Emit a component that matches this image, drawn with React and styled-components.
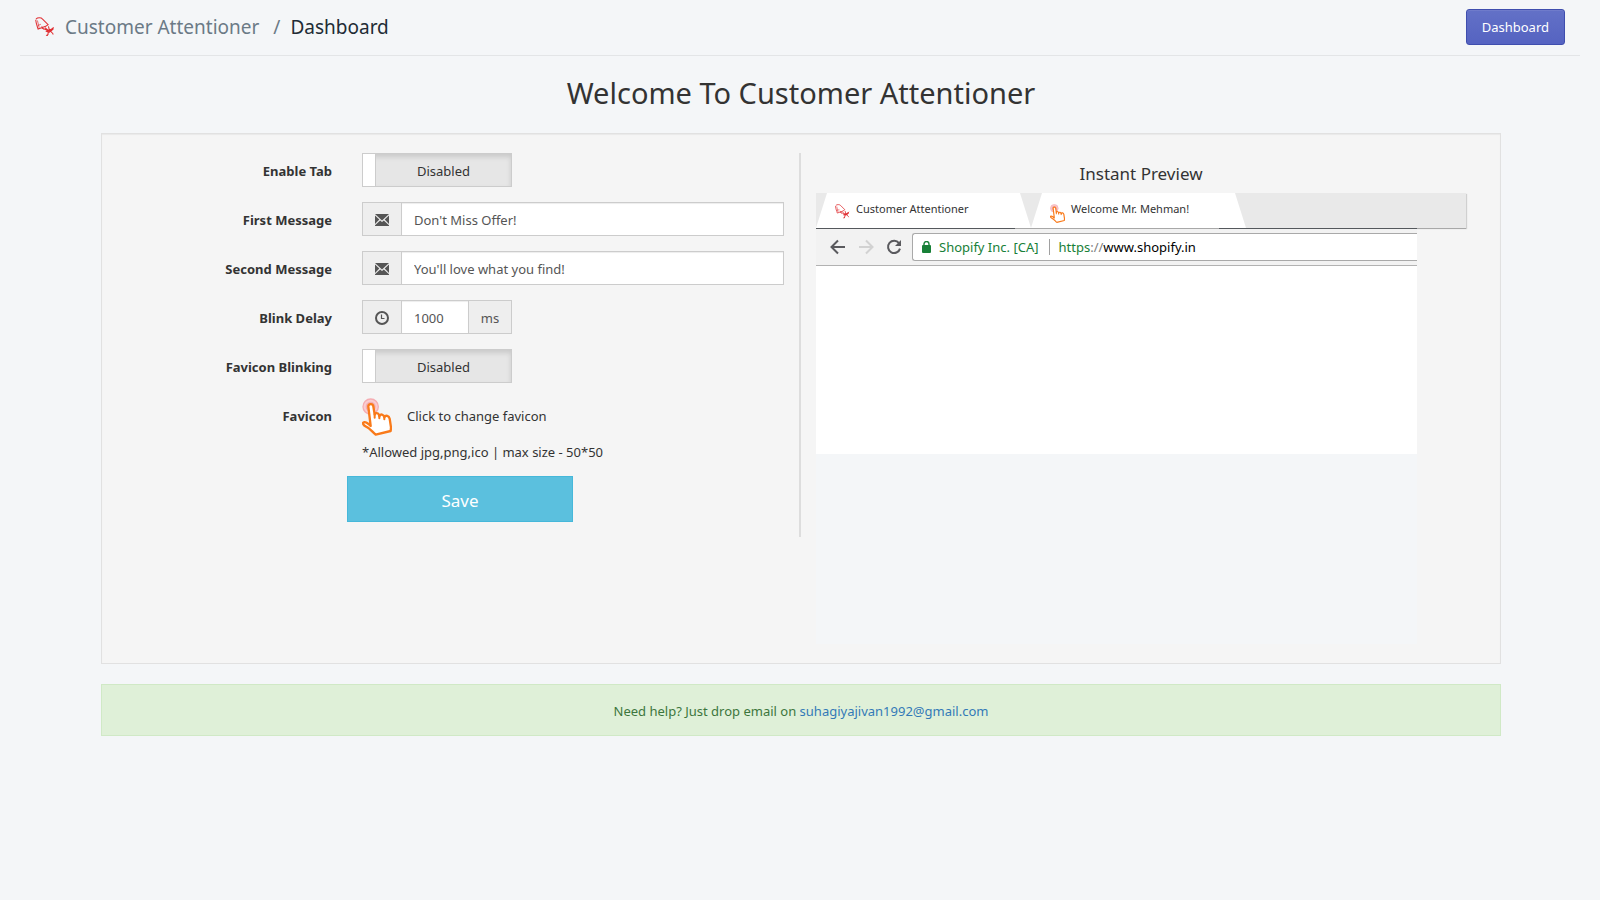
import React, { useState } from 'react';
import styled, { createGlobalStyle } from 'styled-components';

const GlobalStyle = createGlobalStyle`
  *, *::before, *::after {
    box-sizing: border-box;
  }

  body {
    margin: 0;
    background: #f4f6f8;
    color: #333333;
    font-family: 'Noto Sans', 'Open Sans', sans-serif;
    font-size: 13px;
    line-height: 20px;
  }

  button, input {
    font-family: inherit;
  }
`;

const Page = styled.div`
  padding: 0 20px 20px;
`;

const TopBar = styled.header`
  display: flex;
  align-items: center;
  justify-content: space-between;
  height: 56px;
  padding: 0 15px 1px;
  border-bottom: 1px solid #e3e5e7;
`;

const Breadcrumb = styled.nav`
  display: flex;
  align-items: center;
  font-size: 19px;
  line-height: 28px;
`;

const AppLink = styled.a`
  display: flex;
  align-items: center;
  gap: 10px;
  color: #6b7a86;
  text-decoration: none;
`;

const Slash = styled.span`
  margin: 0 10px 0 14px;
  color: #6b7a86;
`;

const Current = styled.span`
  color: #212b35;
`;

const PrimaryButton = styled.button`
  height: 36px;
  padding: 0 15px;
  border: 1px solid #3f4eae;
  border-radius: 3px;
  background: linear-gradient(to bottom, #6371c7, #5563c1);
  box-shadow: inset 0 1px 0 #6f7bcb;
  color: #ffffff;
  font-size: 13px;
  cursor: pointer;
`;

const Main = styled.main`
  margin: 0 79px 0 81px;
`;

const Title = styled.h1`
  margin: 19px 0 22px;
  font-size: 29px;
  font-weight: 400;
  line-height: 36px;
  text-align: center;
`;

const Well = styled.section`
  display: grid;
  grid-template-columns: 1fr 1fr;
  align-items: start;
  margin-bottom: 20px;
  padding: 19px;
  border: 1px solid #e1e1e1;
  background: #f5f5f5;
  box-shadow: inset 0 1px 1px rgba(0, 0, 0, 0.05);
`;

const Form = styled.form`
  padding-bottom: 15px;
  border-right: 2px solid #dddddd;
`;

const Row = styled.div`
  display: grid;
  grid-template-columns: 1fr 2fr;
  margin-bottom: 15px;
`;

const Label = styled.label`
  padding: 8px 15px 0;
  font-weight: 700;
  text-align: right;
`;

const Field = styled.div`
  padding: 0 15px;
`;

const Toggle = styled.span`
  position: relative;
  display: flex;
  width: 150px;
  height: 34px;
  border: 1px solid #cccccc;
  background: ${({ $on }) => ($on ? '#5bc0de' : '#e6e6e6')};
  box-shadow: inset 0 3px 5px rgba(0, 0, 0, 0.125);
`;

const ToggleInput = styled.input`
  position: absolute;
  inset: 0;
  width: 100%;
  height: 100%;
  margin: 0;
  opacity: 0;
  cursor: pointer;
`;

const ToggleHandle = styled.span`
  width: 13px;
  order: ${({ $on }) => ($on ? 1 : 0)};
  border-right: 1px solid #cccccc;
  background: #ffffff;
`;

const ToggleText = styled.span`
  flex: 1;
  padding-top: 7px;
  text-align: center;
`;

const InputGroup = styled.div`
  display: flex;
  width: ${({ $width }) => $width || '100%'};
  height: 34px;
  border: 1px solid #cccccc;
`;

const Addon = styled.span`
  display: flex;
  flex: none;
  align-items: center;
  justify-content: center;
  width: ${({ $wide }) => ($wide ? '42px' : '38px')};
  padding-top: 2px;
  background: #eeeeee;
  color: #555555;
`;

const TextInput = styled.input`
  flex: 1;
  min-width: 0;
  padding: 2px 12px 0;
  border: 0 solid #cccccc;
  border-left-width: 1px;
  border-right-width: ${({ $closed }) => ($closed ? '1px' : '0')};
  border-radius: 0;
  outline: none;
  background: #ffffff;
  box-shadow: inset 0 1px 1px rgba(0, 0, 0, 0.075);
  color: #555555;
  font-size: 13px;
`;

const FaviconButton = styled.button`
  display: flex;
  align-items: flex-start;
  gap: 15px;
  padding: 0;
  border: 0;
  background: none;
  color: inherit;
  font-size: 13px;
  line-height: 36px;
  cursor: pointer;
`;

const Hint = styled.p`
  margin: 6px 0 0;
`;

const SaveButton = styled.button`
  grid-column: 2;
  width: 50%;
  height: 46px;
  padding-top: 3px;
  border: 1px solid #46b8da;
  background: #5bc0de;
  color: #ffffff;
  font-size: 17px;
  cursor: pointer;
`;

const SaveRow = styled(Row)`
  margin: -1px 0 0;
`;

const Preview = styled.div`
  padding: 0 15px;
`;

const PreviewTitle = styled.h2`
  margin: 0;
  padding: 9px 0 7px;
  font-size: 17px;
  font-weight: 400;
  line-height: 24px;
  text-align: center;
`;

const TabStrip = styled.div`
  display: flex;
  height: 35px;
  background: #e9e9e9;
  box-shadow: 1px 1px 1px rgba(0, 0, 0, 0.15);
`;

const Tab = styled.div`
  display: flex;
  gap: 6px;
  width: 215px;
  padding: 6px 19px 0;
  background: #ffffff;
  clip-path: polygon(11px 0, calc(100% - 11px) 0, 100% 100%, 0 100%);
  font-size: 11px;
`;

const TabIcon = styled.span`
  padding-top: 5px;
`;

const TabLine = styled.div`
  display: flex;
  height: 1px;
`;

const LinePart = styled.span`
  flex: ${({ $width }) => ($width ? 'none' : '1')};
  width: ${({ $width }) => $width};
  background: ${({ $dark }) => ($dark ? '#54585c' : '#a8a8a8')};
`;

const Browser = styled.div`
  max-width: 601px;
  padding-bottom: 190px;
  background: #f4f6f8;
`;

const Toolbar = styled.div`
  display: flex;
  align-items: center;
  height: 37px;
  padding-left: 13px;
  border-bottom: 1px solid #b2b2b2;
  background: #f2f2f2;
`;

const NavIcons = styled.div`
  display: flex;
  gap: 10px;
  margin-right: 9px;
`;

const AddressBar = styled.div`
  display: flex;
  flex: 1;
  align-items: center;
  height: 28px;
  padding-left: 9px;
  border: 1px solid #a9a9a9;
  border-right: 0;
  border-radius: 3px 0 0 3px;
  background: #ffffff;
  font-size: 13px;
`;

const Owner = styled.span`
  margin-left: 8px;
  padding-right: 10px;
  border-right: 1px solid #a0a0a0;
  color: #188038;
  line-height: 16px;
`;

const Url = styled.span`
  padding-left: 9px;
  color: #000000;
`;

const Scheme = styled.span`
  color: ${({ $muted }) => ($muted ? '#808080' : '#188038')};
`;

const Viewport = styled.div`
  height: 188px;
  background: #ffffff;
`;

const Help = styled.p`
  margin: 0;
  padding: 16px 15px 14px;
  border: 1px solid #d0e9c6;
  background: #dff0d8;
  color: #3c763d;
  text-align: center;

  a {
    color: #337ab7;
    text-decoration: none;
  }
`;

const LogoIcon = ({ size }) => (
  <svg width={size} height={size} viewBox="0 0 58 58" fill="none" stroke="#e02f33" aria-hidden="true">
    <path strokeWidth="3" d="M3 6C7 1 18 1 22 6L38 22L31 27L9 35C7 28 3 20 2 8" />
    <path strokeWidth="2" d="M7 10L12 31M8 25L17 21M19 26L26 37" />
    <path strokeWidth="3" d="M20 32C25 36 32 34 36 40L41 44L54 30M29 31L38 39L49 35M39 27L42 39L51 47L53 51M31 41L39 44L36 55M32 54L39 50" />
    <path strokeWidth="5" d="M35 39L45 41L53 33" />
  </svg>
);

const HandIcon = ({ width, height }) => (
  <svg width={width} height={height} viewBox="0 0 90 114" aria-hidden="true">
    <circle cx="26" cy="26" r="23" fill="#f9cdd1" stroke="#f5adb3" strokeWidth="4" />
    <circle cx="26" cy="26" r="15" fill="#f4adb2" />
    <path
      d="M19 26C18 17 32 15 34 25L38 50C40 43 49 44 51 51L52 55C55 46 65 49 67 58C71 50 81 53 83 62L87 88L86 99L41 110C31 102 25 91 11 85C3 81 1 74 5 73C11 70 18 76 26 84Z"
      fill="#ffffff"
      stroke="#f97a1a"
      strokeWidth="7"
      strokeLinejoin="round"
    />
    <path d="M38 48V59M52 53V61M67 57V64" stroke="#f97a1a" strokeWidth="6" strokeLinecap="round" />
  </svg>
);

const EnvelopeIcon = () => (
  <svg width="14" height="12" viewBox="0 0 14 12" fill="#555555" aria-hidden="true">
    <path d="M0 0H14L7 6.6ZM0 1.4L4.3 5.6L0 9.9ZM14 1.4L9.7 5.6L14 9.9ZM5.2 6.4L7 8.1L8.8 6.4L14 11.2V12H0V11.2Z" />
  </svg>
);

const ClockIcon = () => (
  <svg width="14" height="14" viewBox="0 0 14 14" fill="none" stroke="#555555" aria-hidden="true">
    <circle cx="7" cy="7" r="6" strokeWidth="2" />
    <path d="M6.5 3.5V7.5H9.5" strokeWidth="1.2" />
  </svg>
);

const ArrowIcon = ({ forward }) => (
  <svg width="18" height="18" viewBox="0 0 18 18" fill="none" stroke={forward ? '#d2d2d2' : '#5a5a5e'} strokeWidth="2" aria-hidden="true">
    <path d={forward ? 'M2 9H15M9 2.5L15.5 9L9 15.5' : 'M16 9H3M9 2.5L2.5 9L9 15.5'} />
  </svg>
);

const ReloadIcon = () => (
  <svg width="18" height="18" viewBox="0 0 18 18" aria-hidden="true">
    <path d="M14 5.2A6.1 6.1 0 1 0 15 10.6" fill="none" stroke="#5a5a5e" strokeWidth="2" />
    <path d="M16 2V8H10Z" fill="#5a5a5e" />
  </svg>
);

const LockIcon = () => (
  <svg width="9" height="12" viewBox="0 0 9 12" aria-hidden="true">
    <rect y="4" width="9" height="8" rx="1" fill="#188038" />
    <path d="M2 5V3A2.5 2.5 0 0 1 7 3V5" fill="none" stroke="#188038" strokeWidth="1.4" />
  </svg>
);

const ToggleField = ({ id, label }) => {
  const [on, setOn] = useState(false);

  return (
    <Row>
      <Label htmlFor={id}>{label}</Label>
      <Field>
        <Toggle $on={on}>
          <ToggleHandle $on={on} />
          <ToggleText>{on ? 'Enabled' : 'Disabled'}</ToggleText>
          <ToggleInput id={id} type="checkbox" checked={on} onChange={() => setOn(!on)} />
        </Toggle>
      </Field>
    </Row>
  );
};

const messages = [
  { id: 'first', label: 'First Message', value: "Don't Miss Offer!" },
  { id: 'second', label: 'Second Message', value: "You'll love what you find!" },
];

const App = () => (
  <>
    <GlobalStyle />
    <Page>
      <TopBar>
        <Breadcrumb>
          <AppLink href="#">
            <LogoIcon size={20} />
            Customer Attentioner
          </AppLink>
          <Slash>/</Slash>
          <Current>Dashboard</Current>
        </Breadcrumb>
        <PrimaryButton type="button">Dashboard</PrimaryButton>
      </TopBar>

      <Main>
        <Title>Welcome To Customer Attentioner</Title>

        <Well>
          <Form onSubmit={(e) => e.preventDefault()}>
            <ToggleField id="enable" label="Enable Tab" />
            {messages.map((message) => (
              <Row key={message.id}>
                <Label htmlFor={message.id}>{message.label}</Label>
                <Field>
                  <InputGroup>
                    <Addon><EnvelopeIcon /></Addon>
                    <TextInput id={message.id} type="text" defaultValue={message.value} />
                  </InputGroup>
                </Field>
              </Row>
            ))}
            <Row>
              <Label htmlFor="delay">Blink Delay</Label>
              <Field>
                <InputGroup $width="150px">
                  <Addon><ClockIcon /></Addon>
                  <TextInput id="delay" type="text" defaultValue="1000" $closed />
                  <Addon $wide>ms</Addon>
                </InputGroup>
              </Field>
            </Row>
            <ToggleField id="blinking" label="Favicon Blinking" />
            <Row>
              <Label htmlFor="favicon">Favicon</Label>
              <Field>
                <FaviconButton id="favicon" type="button">
                  <HandIcon width={30} height={38} />
                  Click to change favicon
                </FaviconButton>
                <Hint>*Allowed jpg,png,ico | max size - 50*50</Hint>
              </Field>
            </Row>
            <SaveRow>
              <SaveButton type="submit">Save</SaveButton>
            </SaveRow>
          </Form>

          <Preview>
            <PreviewTitle>Instant Preview</PreviewTitle>
            <TabStrip>
              <Tab>
                <TabIcon><LogoIcon size={15} /></TabIcon>
                Customer Attentioner
              </Tab>
              <Tab>
                <TabIcon><HandIcon width={15} height={19} /></TabIcon>
                Welcome Mr. Mehman!
              </Tab>
            </TabStrip>
            <TabLine>
              <LinePart $width="199px" $dark />
              <LinePart $width="204px" />
              <LinePart $width="198px" $dark />
              <LinePart />
            </TabLine>
            <Browser>
              <Toolbar>
                <NavIcons>
                  <ArrowIcon />
                  <ArrowIcon forward />
                  <ReloadIcon />
                </NavIcons>
                <AddressBar>
                  <LockIcon />
                  <Owner>Shopify Inc. [CA]</Owner>
                  <Url>
                    <Scheme>https</Scheme>
                    <Scheme $muted>://</Scheme>
                    www.shopify.in
                  </Url>
                </AddressBar>
              </Toolbar>
              <Viewport />
            </Browser>
          </Preview>
        </Well>

        <Help>
          Need help? Just drop email on <a href="mailto:suhagiyajivan1992@gmail.com">suhagiyajivan1992@gmail.com</a>
        </Help>
      </Main>
    </Page>
  </>
);

export default App;
